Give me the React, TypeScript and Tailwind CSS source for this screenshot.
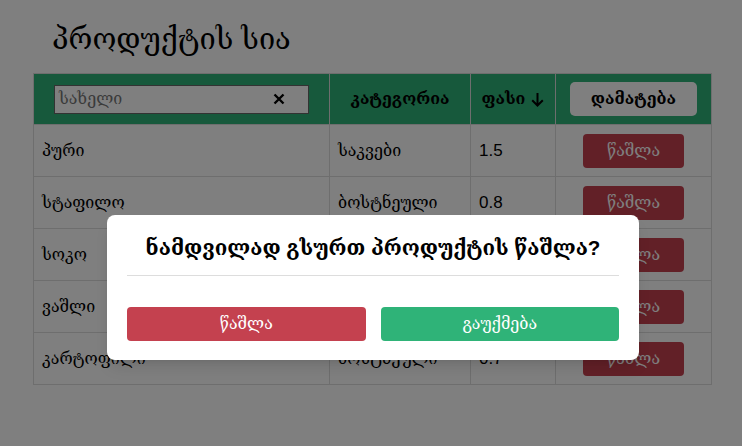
const products = [
  { name: "პური", category: "საკვები", price: "1.5" },
  { name: "სტაფილო", category: "ბოსტნეული", price: "0.8" },
  { name: "სოკო", category: "ბოსტნეული", price: "0.8" },
  { name: "ვაშლი", category: "ხილი", price: "0.7" },
  { name: "კარტოფილი", category: "ბოსტნეული", price: "0.7" },
]

export default function App() {
  return (
    <div
      className="relative h-[446px] w-[742px] overflow-hidden bg-white text-black"
      style={{ fontFamily: '"Liberation Sans", "DejaVu Serif", serif' }}
    >
      <div className="px-[33px] pt-[18px]">
        <h1 className="mb-[13px] pl-[19px] text-[29px] leading-[42px]">პროდუქტის სია</h1>
        <table className="w-[679px] border-collapse text-[16px]">
          <thead>
            <tr className="h-[51px] bg-[#2fb378]">
              <th className="w-[296px] border border-[#dddddd] px-[20px]">
                <div className="flex h-[29px] items-center border border-[#666] bg-white px-[4px]">
                  <span className="flex-1 text-left font-normal text-[#777]">სახელი</span>
                  <svg className="mr-[19px]" width="12" height="12" viewBox="0 0 12 12">
                    <path d="M1.5 1.5 L10.5 10.5 M10.5 1.5 L1.5 10.5" stroke="#000" strokeWidth="2.4" />
                  </svg>
                </div>
              </th>
              <th className="w-[141px] border border-[#dddddd] font-semibold">კატეგორია</th>
              <th className="w-[85px] border border-[#dddddd] font-semibold">
                <span className="inline-flex items-center gap-[6px]">
                  ფასი
                  <svg width="13" height="15" viewBox="0 0 13 15">
                    <path d="M6.5 1 V13.5 M1.2 8.2 L6.5 13.5 L11.8 8.2" stroke="#000" strokeWidth="2" fill="none" />
                  </svg>
                </span>
              </th>
              <th className="border border-[#dddddd] px-[14px]">
                <div className="flex h-[34px] items-center justify-center rounded-[5px] bg-white font-semibold">
                  დამატება
                </div>
              </th>
            </tr>
          </thead>
          <tbody>
            {products.map((p) => (
              <tr key={p.name} className="h-[52px]">
                <td className="border border-[#dddddd] px-[8px]">{p.name}</td>
                <td className="border border-[#dddddd] px-[8px]">{p.category}</td>
                <td className="border border-[#dddddd] px-[8px] text-[17px]">{p.price}</td>
                <td className="border border-[#dddddd] px-[8px]">
                  <div className="mx-auto flex h-[34px] w-[101px] items-center justify-center rounded-[4px] bg-[#c4414f] text-white">
                    წაშლა
                  </div>
                </td>
              </tr>
            ))}
          </tbody>
        </table>
      </div>

      <div className="absolute inset-0 bg-black/50" />

      <div className="absolute left-[107px] top-[215px] w-[532px] rounded-[8px] bg-white px-[20px] pt-[18px] pb-[19px] shadow-lg">
        <h2 className="text-center text-[20.5px] font-bold leading-[30px]">ნამდვილად გსურთ პროდუქტის წაშლა?</h2>
        <hr className="mt-[12px] border-[#dddddd]" />
        <div className="mt-[31px] flex gap-[15px]">
          <button className="h-[34px] flex-1 rounded-[4px] bg-[#c4414f] text-[16px] text-white">წაშლა</button>
          <button className="h-[34px] flex-1 rounded-[4px] bg-[#2fb378] text-[16px] text-white">გაუქმება</button>
        </div>
      </div>
    </div>
  )
}
